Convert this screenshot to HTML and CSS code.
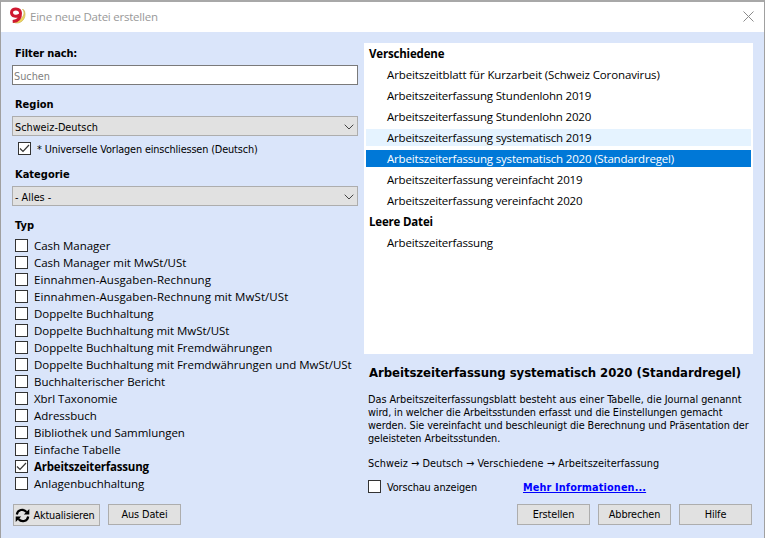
FILE: index.html
```html
<!DOCTYPE html>
<html lang="de">
<head>
<meta charset="utf-8">
<title>Eine neue Datei erstellen</title>
<link rel="stylesheet" href="styles.css">
</head>
<body>
<main class="dialog">
  <header class="titlebar">
    <svg class="logo" width="17" height="18" viewBox="0 0 17 18"><path d="M13.500 2c4.500 5-1 12-9.500 13 7 3.500 14-3 11.500-11z" fill="#f0d75c" stroke="#cfb75c" stroke-width=".8"/><path d="M10.500 8C8 10.200 2.500 9.600 2.500 5.500c0-4.800 8.700-5 9 .5.200 5-2.500 8.100-7.800 8.400" fill="none" stroke="#cf1830" stroke-width="3"/></svg>
    <span class="title">Eine neue Datei erstellen</span>
    <svg class="close" width="11" height="11" viewBox="0 0 11 11"><path d="M.5.5l10 10M10.500.5l-10 10" stroke="#8b8b8b" fill="none"/></svg>
  </header>
  <div class="content">
    <section class="filters">
      <h2 class="label first">Filter nach:</h2>
      <input class="search" type="text" placeholder="Suchen">
      <h2 class="label">Region</h2>
      <div class="select"><span>Schweiz-Deutsch</span><svg width="10" height="6" viewBox="0 0 10 6"><path d="M.7.700L5 5 9.300.7" fill="none" stroke="#444"/></svg></div>
      <div class="universal"><i class="box"><svg width="11" height="11" viewBox="0 0 11 11"><path d="M1 5.500l3 3L10 2" fill="none" stroke="#333" stroke-width="1.200"/></svg></i><span>* Universelle Vorlagen einschliessen (Deutsch)</span></div>
      <h2 class="label">Kategorie</h2>
      <div class="select"><span>- Alles -</span><svg width="10" height="6" viewBox="0 0 10 6"><path d="M.7.700L5 5 9.300.7" fill="none" stroke="#444"/></svg></div>
      <h2 class="label">Typ</h2>
      <ul class="types">
        <li><i class="box"></i><span>Cash Manager</span></li>
        <li><i class="box"></i><span>Cash Manager mit MwSt/USt</span></li>
        <li class="wide"><i class="box"></i><span>Einnahmen-Ausgaben-Rechnung</span></li>
        <li class="wide"><i class="box"></i><span>Einnahmen-Ausgaben-Rechnung mit MwSt/USt</span></li>
        <li><i class="box"></i><span>Doppelte Buchhaltung</span></li>
        <li><i class="box"></i><span>Doppelte Buchhaltung mit MwSt/USt</span></li>
        <li><i class="box"></i><span>Doppelte Buchhaltung mit Fremdwährungen</span></li>
        <li><i class="box"></i><span>Doppelte Buchhaltung mit Fremdwährungen und MwSt/USt</span></li>
        <li><i class="box"></i><span>Buchhalterischer Bericht</span></li>
        <li><i class="box"></i><span>Xbrl Taxonomie</span></li>
        <li><i class="box"></i><span>Adressbuch</span></li>
        <li><i class="box"></i><span>Bibliothek und Sammlungen</span></li>
        <li><i class="box"></i><span>Einfache Tabelle</span></li>
        <li class="checked"><i class="box"><svg width="11" height="11" viewBox="0 0 11 11"><path d="M1 5.500l3 3L10 2" fill="none" stroke="#333" stroke-width="1.200"/></svg></i><span>Arbeitszeiterfassung</span></li>
        <li><i class="box"></i><span>Anlagenbuchhaltung</span></li>
      </ul>
      <div class="buttons left">
        <button class="refresh"><svg width="15" height="15" viewBox="0 0 15 15"><path d="M1.800 6.500C2.500 1.500 8.500.3 11.500 4M13.200 8.500C12.500 13.500 6.500 14.700 3.500 11" fill="none" stroke="#000" stroke-width="2.200"/><path d="M14.300 1v5.500H8.800zM.7 14V8.500h5.500z"/></svg><span>Aktualisieren</span></button>
        <button><span>Aus Datei</span></button>
      </div>
    </section>
    <section class="templates">
      <ul class="list">
        <li class="group">Verschiedene</li>
        <li class="wide">Arbeitszeitblatt für Kurzarbeit (Schweiz Coronavirus)</li>
        <li>Arbeitszeiterfassung Stundenlohn 2019</li>
        <li>Arbeitszeiterfassung Stundenlohn 2020</li>
        <li class="hover">Arbeitszeiterfassung systematisch 2019</li>
        <li class="selected">Arbeitszeiterfassung systematisch 2020 (Standardregel)</li>
        <li>Arbeitszeiterfassung vereinfacht 2019</li>
        <li>Arbeitszeiterfassung vereinfacht 2020</li>
        <li class="group">Leere Datei</li>
        <li>Arbeitszeiterfassung</li>
      </ul>
      <h1 class="heading">Arbeitszeiterfassung systematisch 2020 (Standardregel)</h1>
      <p class="description"><span class="loose">Das Arbeitszeiterfassungsblatt besteht aus einer Tabelle, die Journal genannt</span><br>wird, in welcher die Arbeitsstunden erfasst und die Einstellungen gemacht<br><span class="loose">werden. Sie vereinfacht und beschleunigt die Berechnung und Präsentation der</span><br><span class="loose">geleisteten Arbeitsstunden.</span></p>
      <p class="path">Schweiz → Deutsch → Verschiedene → Arbeitszeiterfassung</p>
      <div class="preview"><i class="box"></i><span>Vorschau anzeigen</span><a class="more">Mehr Informationen...</a></div>
      <div class="buttons right">
        <button><span>Erstellen</span></button>
        <button><span>Abbrechen</span></button>
        <button><span>Hilfe</span></button>
      </div>
    </section>
  </div>
</main>
</body>
</html>
```
FILE: styles.css
```css
* { box-sizing: border-box; }
body { margin: 0; width: 765px; height: 538px; overflow: hidden; background: #dae5fa; font: 10.8px "DejaVu Sans Condensed", "DejaVu Sans", sans-serif; color: #000; }
h1, h2, p, ul { margin: 0; padding: 0; }
li { list-style: none; white-space: nowrap; }
.dialog { height: 538px; border: solid #a0a0a0; border-width: 1px 1px 0; border-top: 2px solid #a8a8a8; background: #dae5fa; }
.titlebar { height: 30px; background: #fff; display: flex; align-items: center; padding: 0 10px 2px 8px; }
.title { margin-left: 4px; flex: 1; color: #999; font: 11.5px "Open Sans", sans-serif; letter-spacing: -.23px; }
.content { display: flex; height: 506px; }
.filters { flex: none; width: 363px; padding-left: 11px; }
.label { font-size: 11px; font-weight: bold; line-height: 14px; padding: 1px 0 0 3px; margin-top: 12px; height: 19px; }
.label.first { margin: 0; padding-top: 15px; height: 33px; letter-spacing: -.15px; }
.search { display: block; width: 346px; height: 20px; border: 1px solid #7a7a7a; padding: 2px 1px 0; margin: 0; border-radius: 0; background: #fff; font: 10.8px "DejaVu Sans Condensed", sans-serif; outline: 0; }
.search::placeholder { color: #808080; opacity: 1; }
.select { width: 346px; height: 20px; border: 1px solid #adadad; background: #e1e1e1; display: flex; align-items: center; justify-content: space-between; padding: 2px 3px 0 2px; }
.box { flex: none; width: 13px; height: 13px; border: 1px solid #333; background: #fff; display: block; }
.box svg { display: block; }
.universal { height: 13px; margin: 6px 0 0 6px; display: flex; align-items: center; }
.universal span { margin-left: 6px; padding-top: 1px; white-space: nowrap; letter-spacing: -.13px; }
.types li { height: 17px; display: flex; align-items: center; padding-left: 3px; font: 11.5px/17px "Open Sans", sans-serif; letter-spacing: -.03px; }
.types .wide { letter-spacing: .08px; }
.types span { margin-left: 6px; }
.types .checked { font-weight: bold; letter-spacing: -.2px; }
.buttons { display: flex; gap: 8px; }
button { width: 73px; height: 21px; padding: 0; border: 1px solid #adadad; background: #e1e1e1; font: 10.8px "DejaVu Sans Condensed", sans-serif; letter-spacing: -.1px; color: #000; display: flex; align-items: center; justify-content: center; white-space: nowrap; }
.buttons.left { margin: 12px 0 0 1px; }
.refresh { width: 87px; height: 22px; gap: 4px; padding-right: 4px; letter-spacing: -.18px; }
.refresh span { padding-top: 1px; }
.templates { width: 390px; padding-top: 11px; }
.list { height: 311px; width: 389px; background: #fff; padding: 0 2px; }
.list li { height: 17px; margin-bottom: 4px; padding-left: 21px; font: 11.5px/17px "Open Sans", sans-serif; letter-spacing: -.18px; }
.list .wide { letter-spacing: -.12px; }
.list li:first-child { padding-top: 2px; height: 19px; }
.list .group { font-weight: bold; padding-left: 3px; }
.list .hover { background: #e5f3ff; }
.list .selected { background: #0078d7; color: #fff; }
.heading { font-size: 13px; line-height: 18px; margin: 10px 0 0 5px; white-space: nowrap; letter-spacing: -.05px; }
.description { margin: 11px 0 0 4px; line-height: 13px; white-space: nowrap; letter-spacing: -.11px; }
.loose { letter-spacing: -.08px; }
.loose:first-child { letter-spacing: -.02px; }
.path { margin: 12px 0 0 4px; line-height: 13px; white-space: nowrap; letter-spacing: .07px; }
.preview { display: flex; align-items: center; height: 13px; margin: 10px 0 0 4px; }
.preview span { margin-left: 6px; width: 136px; white-space: nowrap; letter-spacing: -.1px; padding-top: 1px; }
.more { color: #00f; font-weight: bold; text-decoration: underline; white-space: nowrap; letter-spacing: .13px; padding-top: 1px; }
.buttons.right { margin: 11px 0 0 153px; }
```
